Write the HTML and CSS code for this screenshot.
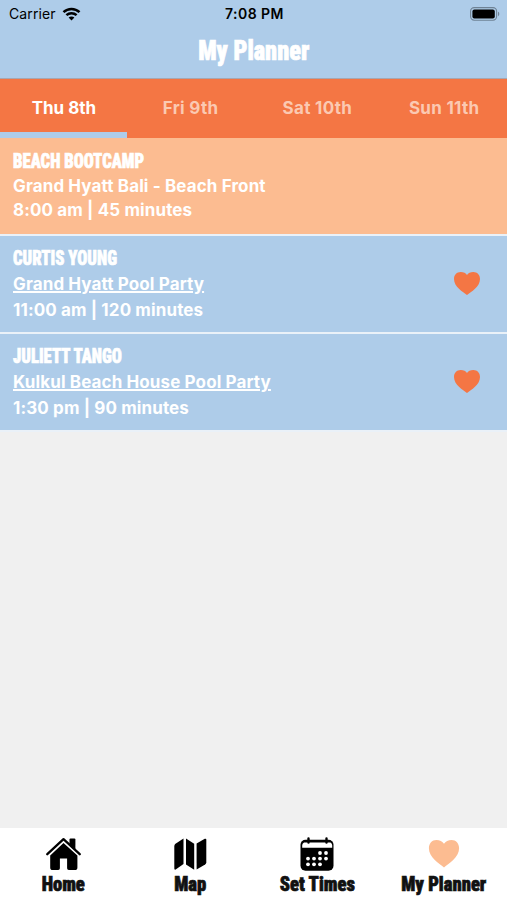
FILE: index.html
```html
<!DOCTYPE html>
<html lang="en">
<head>
    <meta charset="UTF-8">
    <meta name="viewport" content="width=device-width, initial-scale=1.0">
    <title>My Planner</title>
    <link rel="stylesheet" href="styles.css">
</head>
<body>
    <div class="app">
        <header class="header">
            <div class="status-bar">
                <div class="carrier">
                    <span>Carrier</span>
                    <svg width="19" height="14" viewBox="0 0 18 14" fill="none" stroke="#000" stroke-width="2.5">
                        <path d="M1 5.2C5.5.9 12.5.9 17 5.2"/>
                        <path d="M3.9 8.2c2.9-2.7 7.3-2.7 10.2 0"/>
                        <path d="M6.1 10.6c1.6-1.6 4.2-1.6 5.8 0L9 13.6z" fill="#000" stroke="none"/>
                    </svg>
                </div>
                <span class="clock">7:08 PM</span>
                <svg class="battery" width="30" height="14" viewBox="0 0 30 14">
                    <rect x=".6" y=".6" width="26" height="12.6" rx="3.6" fill="none" stroke="#6f8295" stroke-width="1.1"/>
                    <rect x="2.4" y="2.4" width="22.4" height="9" rx="2" fill="#000"/>
                    <path d="M28 4.8c1.7.6 1.7 3.8 0 4.4z" fill="#6f8295"/>
                </svg>
            </div>
            <h1 class="title"><span class="display">My Planner</span></h1>
        </header>

        <nav class="days">
            <a class="day active">Thu 8th</a>
            <a class="day">Fri 9th</a>
            <a class="day">Sat 10th</a>
            <a class="day">Sun 11th</a>
        </nav>

        <main class="list">
            <div class="event event-activity">
                <div class="event-info">
                    <h2 class="event-name"><span class="display">BEACH BOOTCAMP</span></h2>
                    <p>Grand Hyatt Bali - Beach Front</p>
                    <p>8:00 am | 45 minutes</p>
                </div>
            </div>
            <div class="event">
                <div class="event-info">
                    <h2 class="event-name"><span class="display">CURTIS YOUNG</span></h2>
                    <p><a class="venue">Grand Hyatt Pool Party</a></p>
                    <p>11:00 am | 120 minutes</p>
                </div>
                <svg class="heart" width="26" height="23" viewBox="0 0 26 24" preserveAspectRatio="none">
                    <path d="M13 24C9 20.6 0 15.5 0 7.2 0 3 2.8 0 6.7 0 9.6 0 11.9 1.300 13 3.200 14.100 1.300 16.400 0 19.300 0 23.200 0 26 3 26 7.200 26 15.500 17 20.600 13 24z"/>
                </svg>
            </div>
            <div class="event">
                <div class="event-info">
                    <h2 class="event-name"><span class="display">JULIETT TANGO</span></h2>
                    <p><a class="venue">Kulkul Beach House Pool Party</a></p>
                    <p>1:30 pm | 90 minutes</p>
                </div>
                <svg class="heart" width="26" height="23" viewBox="0 0 26 24" preserveAspectRatio="none">
                    <path d="M13 24C9 20.6 0 15.5 0 7.2 0 3 2.8 0 6.7 0 9.6 0 11.9 1.300 13 3.200 14.100 1.300 16.400 0 19.300 0 23.200 0 26 3 26 7.200 26 15.500 17 20.600 13 24z"/>
                </svg>
            </div>
        </main>

        <nav class="tab-bar">
            <a class="tab">
                <svg width="36" height="34" viewBox="0 0 36 34">
                    <path d="M24.500 2.600q0-1 1-1h3.900q1 0 1 1V13.500L24.500 8z"/>
                    <path d="M2.300 17.200 18.500 2.200l16.200 15" fill="none" stroke="#000" stroke-width="2.300" stroke-linecap="round" stroke-linejoin="round"/>
                    <path d="M18.500 6 32.400 18.600v11.800q0 2.600-2.600 2.600h-6q-1.700 0-1.700-1.700V21.500h-7.200v9.800q0 1.700-1.700 1.700H7.800q-2.600 0-2.600-2.600V18.600z"/>
                </svg>
                <span class="display">Home</span>
            </a>
            <a class="tab">
                <svg width="36" height="34" viewBox="0 0 36 34">
                    <path d="M11.500 1.500v25.600L3.700 32.600q-1.400.6-1.400-1V9q0-1.500 1.200-2.300z"/>
                    <path d="M14 1.500l8.200 5.200v26L14 27.400z"/>
                    <path d="M24.600 6.500l8.200-4.700q1.500-.6 1.500 1v22.600q0 1.200-1.200 2l-8.500 5.200z"/>
                </svg>
                <span class="display">Map</span>
            </a>
            <a class="tab">
                <svg width="36" height="34" viewBox="0 0 36 34">
                    <rect x="1.500" y="2.700" width="33" height="31" rx="5"/>
                    <path d="M5 5.600h26.500q1.700 1 1.700 2.700v2.500H3.200V8.300q0-1.700 1.800-2.700z" fill="#fff"/>
                    <path d="M9.500 1.500v4M27.500 1.500v4" stroke="#000" stroke-width="2.400" stroke-linecap="round"/>
                    <g fill="#fff">
                        <circle cx="21" cy="16" r="1.900"/><circle cx="27" cy="16" r="1.900"/>
                        <circle cx="9" cy="21.600" r="1.900"/><circle cx="15" cy="21.600" r="1.900"/><circle cx="21" cy="21.600" r="1.900"/><circle cx="27" cy="21.600" r="1.900"/>
                        <circle cx="9" cy="27.300" r="1.900"/><circle cx="15" cy="27.300" r="1.900"/><circle cx="21" cy="27.300" r="1.900"/>
                    </g>
                </svg>
                <span class="display">Set Times</span>
            </a>
            <a class="tab">
                <svg class="planner-icon" width="36" height="34" viewBox="0 0 36 34">
                    <path d="M18 30.500C13 26.200 2.900 20.500 2.900 11.200 2.900 6.500 6 3 10.400 3 13.700 3 16.500 4.500 18 6.700 19.500 4.500 22.300 3 25.600 3 30 3 33.100 6.500 33.100 11.200 33.100 20.500 23 26.200 18 30.500z"/>
                </svg>
                <span class="display">My Planner</span>
            </a>
        </nav>
    </div>
</body>
</html>
```
FILE: styles.css
```css
* {
    box-sizing: border-box;
}

body {
    margin: 0;
    font-family: Inter, "Liberation Sans", sans-serif;
    background-color: #f0f0f0;
}

h1, h2, p {
    margin: 0;
}

.app {
    display: flex;
    flex-direction: column;
    height: 900px;
}

/* heavy condensed face for headings and tab labels */
.display {
    display: inline-block;
    font-family: Roboto, "Open Sans", sans-serif;
    font-weight: 900;
    font-stretch: 75%;
    white-space: nowrap;
    -webkit-text-stroke: 0.7px currentColor;
}

.header {
    height: 79px;
    background-color: #aecce9;
    border-bottom: 1px solid #a8a6b0;
}

.status-bar {
    display: grid;
    grid-template-columns: 1fr auto 1fr;
    align-items: center;
    height: 27px;
    padding: 0 7px 0 9px;
    font-size: 14px;
}

.carrier {
    display: flex;
    align-items: center;
    gap: 6px;
    letter-spacing: 0.1px;
}

.clock {
    font-weight: 600;
    letter-spacing: 0.45px;
}

.battery {
    justify-self: end;
}

.title {
    text-align: center;
    font-size: 27px;
    line-height: 47px;
    color: #fff;
}

.title .display {
    transform: scaleX(0.9);
}

.days {
    display: flex;
    height: 59px;
    background-color: #f47644;
}

.day {
    flex: 1;
    padding-left: 1px;
    border-bottom: 6px solid transparent;
    text-align: center;
    font-size: 17px;
    font-weight: 650;
    line-height: 58px;
    letter-spacing: 0.3px;
    color: #fbc9b2;
}

.day.active {
    font-weight: 700;
    letter-spacing: 0;
    color: #fff;
    border-bottom-color: #aecce9;
}

.list {
    flex: 1;
}

.event {
    display: flex;
    align-items: center;
    justify-content: space-between;
    height: 98px;
    padding: 0 27px 0 13px;
    border-bottom: 2px solid #eaf1f8;
    background-color: #aecce9;
    color: #fff;
    font-size: 17px;
    font-weight: 650;
    line-height: 26px;
    letter-spacing: 0.12px;
}

.event-activity {
    background-color: #fcbc91;
    line-height: 24px;
}

.event-activity .event-info {
    padding-bottom: 2px;
}

.event-name {
    font-size: 20px;
    line-height: 26px;
    letter-spacing: 0;
}

.event-activity .event-name {
    line-height: 26px;
}

.event-name .display {
    transform: scaleX(0.835);
    transform-origin: left;
}

.venue {
    text-decoration: underline;
    text-decoration-thickness: 1.5px;
    text-underline-offset: 1px;
}

.heart {
    margin-bottom: 2px;
    fill: #f47644;
}

.tab-bar {
    display: grid;
    grid-template-columns: repeat(4, 1fr);
    height: 72px;
    background-color: #fff;
}

.tab {
    display: flex;
    flex-direction: column;
    align-items: center;
    padding-top: 9px;
    font-size: 20px;
    line-height: 26px;
    color: #111;
}

.tab .display {
    transform: scaleX(0.93);
}

.planner-icon {
    fill: #fcbc91;
}
```
